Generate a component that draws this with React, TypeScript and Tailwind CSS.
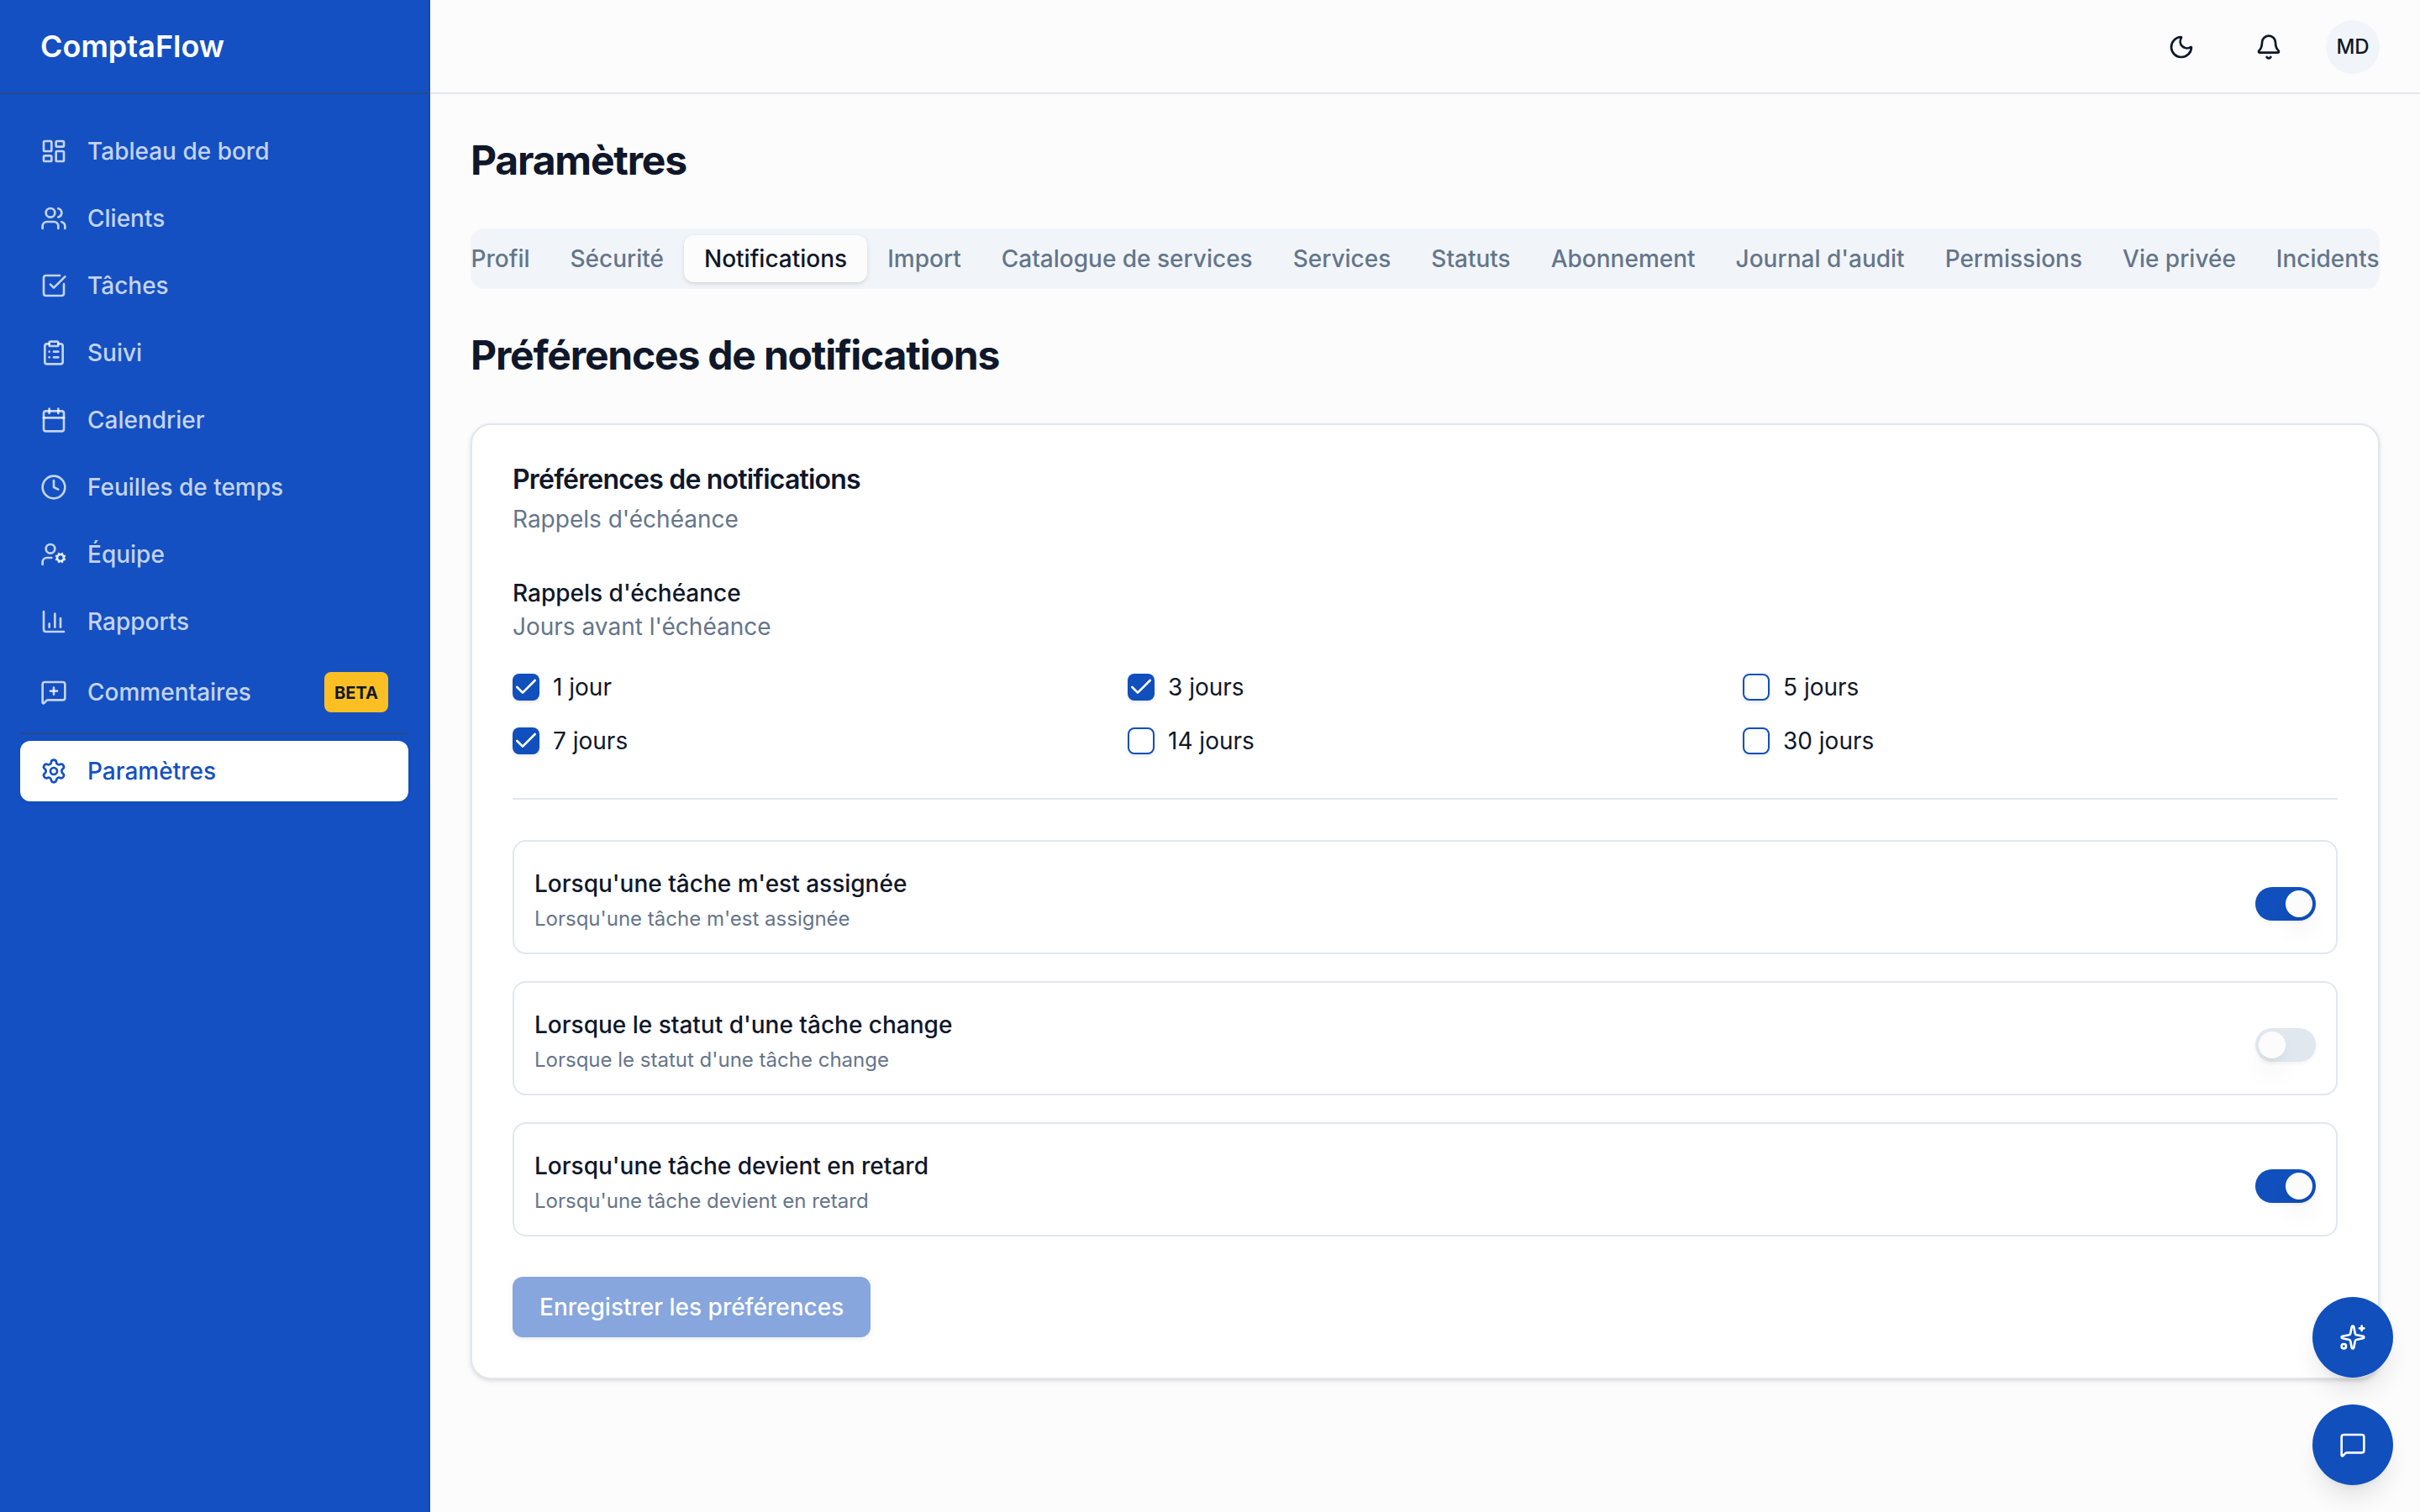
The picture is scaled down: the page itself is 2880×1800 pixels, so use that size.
import {
  Bell,
  Calendar,
  ChartColumn,
  Check,
  ClipboardList,
  Clock,
  LayoutDashboard,
  MessageSquare,
  MessageSquarePlus,
  Moon,
  Settings,
  Sparkles,
  SquareCheckBig,
  UserCog,
  Users,
  type LucideIcon,
} from 'lucide-react';

const navItems: { label: string; icon: LucideIcon; badge?: string }[] = [
  { label: 'Tableau de bord', icon: LayoutDashboard },
  { label: 'Clients', icon: Users },
  { label: 'Tâches', icon: SquareCheckBig },
  { label: 'Suivi', icon: ClipboardList },
  { label: 'Calendrier', icon: Calendar },
  { label: 'Feuilles de temps', icon: Clock },
  { label: 'Équipe', icon: UserCog },
  { label: 'Rapports', icon: ChartColumn },
  { label: 'Commentaires', icon: MessageSquarePlus, badge: 'BETA' },
];

const tabs = [
  'Profil',
  'Sécurité',
  'Notifications',
  'Import',
  'Catalogue de services',
  'Services',
  'Statuts',
  'Abonnement',
  "Journal d'audit",
  'Permissions',
  'Vie privée',
  'Incidents',
];

const reminders = [
  { label: '1 jour', checked: true },
  { label: '3 jours', checked: true },
  { label: '5 jours', checked: false },
  { label: '7 jours', checked: true },
  { label: '14 jours', checked: false },
  { label: '30 jours', checked: false },
];

const toggles = [
  { label: "Lorsqu'une tâche m'est assignée", on: true },
  { label: "Lorsque le statut d'une tâche change", on: false },
  { label: "Lorsqu'une tâche devient en retard", on: true },
];

function Sidebar() {
  return (
    <aside className="flex w-[512px] shrink-0 flex-col border-r-2 border-[#27498c] bg-[#1450c2]">
      <div className="flex h-28 shrink-0 items-center border-b-2 border-[#27498c] px-12">
        <span className="text-[36px] leading-[56px] font-semibold text-white">ComptaFlow</span>
      </div>
      <nav className="flex flex-col gap-2 px-6 py-8">
        {navItems.map(({ label, icon: Icon, badge }) => (
          <a
            key={label}
            className="flex items-center gap-6 rounded-xl px-6 py-4 text-[28px] leading-10 font-medium text-white/75"
          >
            <Icon className="size-8 shrink-0" />
            <span className="flex-1">{label}</span>
            {badge && (
              <span className="flex h-12 w-[76px] items-center justify-center rounded-lg bg-[#fbbf24] pt-0.5 text-[20px] leading-8 font-bold text-[#0f172a]">
                {badge}
              </span>
            )}
          </a>
        ))}
        <div className="h-0.5 bg-[#27498c]" />
        <a className="flex items-center gap-6 rounded-xl bg-white px-6 py-4 text-[28px] leading-10 font-medium text-[#1450c2] shadow-[0_2px_4px_rgba(0,0,0,0.05)]">
          <Settings className="size-8 shrink-0" />
          <span className="flex-1">Paramètres</span>
        </a>
      </nav>
    </aside>
  );
}

function Header() {
  return (
    <header className="h-28 shrink-0 border-b-2 border-[#e1e7ef]">
      <div className="flex h-28 items-center justify-end gap-8 px-12">
        <button className="flex size-[72px] items-center justify-center">
          <Moon className="size-8" />
        </button>
        <button className="flex size-[72px] items-center justify-center">
          <Bell className="size-8" />
        </button>
        <div className="flex size-16 items-center justify-center rounded-full bg-[#f1f5f9] text-[24px] leading-8 font-medium">
          MD
        </div>
      </div>
    </header>
  );
}

function Checkbox({ checked }: { checked: boolean }) {
  return (
    <span
      className={
        checked
          ? 'flex size-8 shrink-0 items-center justify-center rounded-lg bg-[#104fbc] text-white shadow-[0_2px_4px_rgba(0,0,0,0.1)]'
          : 'flex size-8 shrink-0 rounded-lg border-2 border-[#104fbc] shadow-[0_2px_4px_rgba(0,0,0,0.1)]'
      }
    >
      {checked && <Check className="size-8" />}
    </span>
  );
}

function Switch({ on }: { on: boolean }) {
  return (
    <span
      className={
        on
          ? 'mt-4 flex h-10 w-[72px] shrink-0 items-center justify-end rounded-full bg-[#104fbc] p-1 shadow-[0_2px_4px_rgba(0,0,0,0.05)]'
          : 'mt-4 flex h-10 w-[72px] shrink-0 items-center rounded-full bg-[#e1e7ef] p-1 shadow-[0_2px_4px_rgba(0,0,0,0.05)]'
      }
    >
      <span className="size-8 rounded-full bg-[#fcfcfc] shadow-[0_20px_30px_-6px_rgba(0,0,0,0.1),0_8px_12px_-8px_rgba(0,0,0,0.1)]" />
    </span>
  );
}

function PreferencesCard() {
  return (
    <section className="rounded-3xl border-2 border-[#e1e7ef] bg-white p-12 shadow-[0_2px_6px_rgba(0,0,0,0.1),0_2px_4px_-2px_rgba(0,0,0,0.1)]">
      <div className="flex flex-col gap-2.5">
        <h3 className="text-[32px] leading-[34px] font-semibold tracking-[-0.025em]">Préférences de notifications</h3>
        <p className="text-[28px] leading-10 text-[#65758b]">Rappels d'échéance</p>
      </div>

      <div className="mt-12 text-[28px] leading-10">
        <p className="font-medium">Rappels d'échéance</p>
        <p className="text-[#65758b]">Jours avant l'échéance</p>
        <div className="mt-8 grid grid-cols-3 gap-6">
          {reminders.map((item) => (
            <label key={item.label} className="flex items-center gap-4">
              <Checkbox checked={item.checked} />
              {item.label}
            </label>
          ))}
        </div>
      </div>

      <div className="my-12 h-0.5 bg-[#e1e7ef]" />

      <div className="flex flex-col gap-8">
        {toggles.map((item) => (
          <div
            key={item.label}
            className="flex items-center justify-between rounded-2xl border-2 border-[#e1e7ef] p-6"
          >
            <div className="flex flex-col gap-1">
              <p className="h-12 pt-0.5 text-[28px] leading-[48px] font-medium">{item.label}</p>
              <p className="text-[24px] leading-8 text-[#65758b]">{item.label}</p>
            </div>
            <Switch on={item.on} />
          </div>
        ))}
      </div>

      <button className="mt-12 flex h-[72px] items-center rounded-xl bg-[#104fbc] px-8 text-[28px] leading-10 font-medium text-white opacity-50 shadow-[0_2px_6px_rgba(0,0,0,0.1),0_2px_4px_-2px_rgba(0,0,0,0.1)]">
        Enregistrer les préférences
      </button>
    </section>
  );
}

function FloatingActions() {
  return (
    <div className="fixed right-8 bottom-8 flex flex-col gap-8">
      {[Sparkles, MessageSquare].map((Icon, i) => (
        <button
          key={i}
          className="flex size-24 items-center justify-center rounded-full bg-[#104fbc] text-white shadow-[0_20px_30px_-6px_rgba(0,0,0,0.1),0_8px_12px_-8px_rgba(0,0,0,0.1)]"
        >
          <Icon className="size-8" />
        </button>
      ))}
    </div>
  );
}

export default function App() {
  return (
    <div className="flex h-screen overflow-hidden bg-[#fcfcfc] font-['Inter',sans-serif] text-[#0f172a]">
      <Sidebar />
      <div className="flex min-w-0 flex-1 flex-col">
        <Header />
        <main className="flex flex-col gap-12 p-12">
          <h1 className="pb-0.5 text-[48px] leading-[62px] font-bold tracking-[-0.025em]">Paramètres</h1>
          <div className="flex h-[72px] items-center justify-center overflow-hidden rounded-2xl bg-[#f1f5f9] p-2 text-[28px] leading-10 font-medium text-[#65758b]">
            {tabs.map((tab) => (
              <button
                key={tab}
                className={
                  tab === 'Notifications'
                    ? 'shrink-0 rounded-xl bg-[#fcfcfc] px-6 py-2 whitespace-nowrap text-[#0f172a] shadow-[0_2px_6px_rgba(0,0,0,0.1),0_2px_4px_-2px_rgba(0,0,0,0.1)]'
                    : 'shrink-0 px-6 py-2 whitespace-nowrap'
                }
              >
                {tab}
              </button>
            ))}
          </div>
          <h2 className="pb-0.5 text-[48px] leading-[62px] font-bold tracking-[-0.025em]">Préférences de notifications</h2>
          <PreferencesCard />
        </main>
      </div>
      <FloatingActions />
    </div>
  );
}
